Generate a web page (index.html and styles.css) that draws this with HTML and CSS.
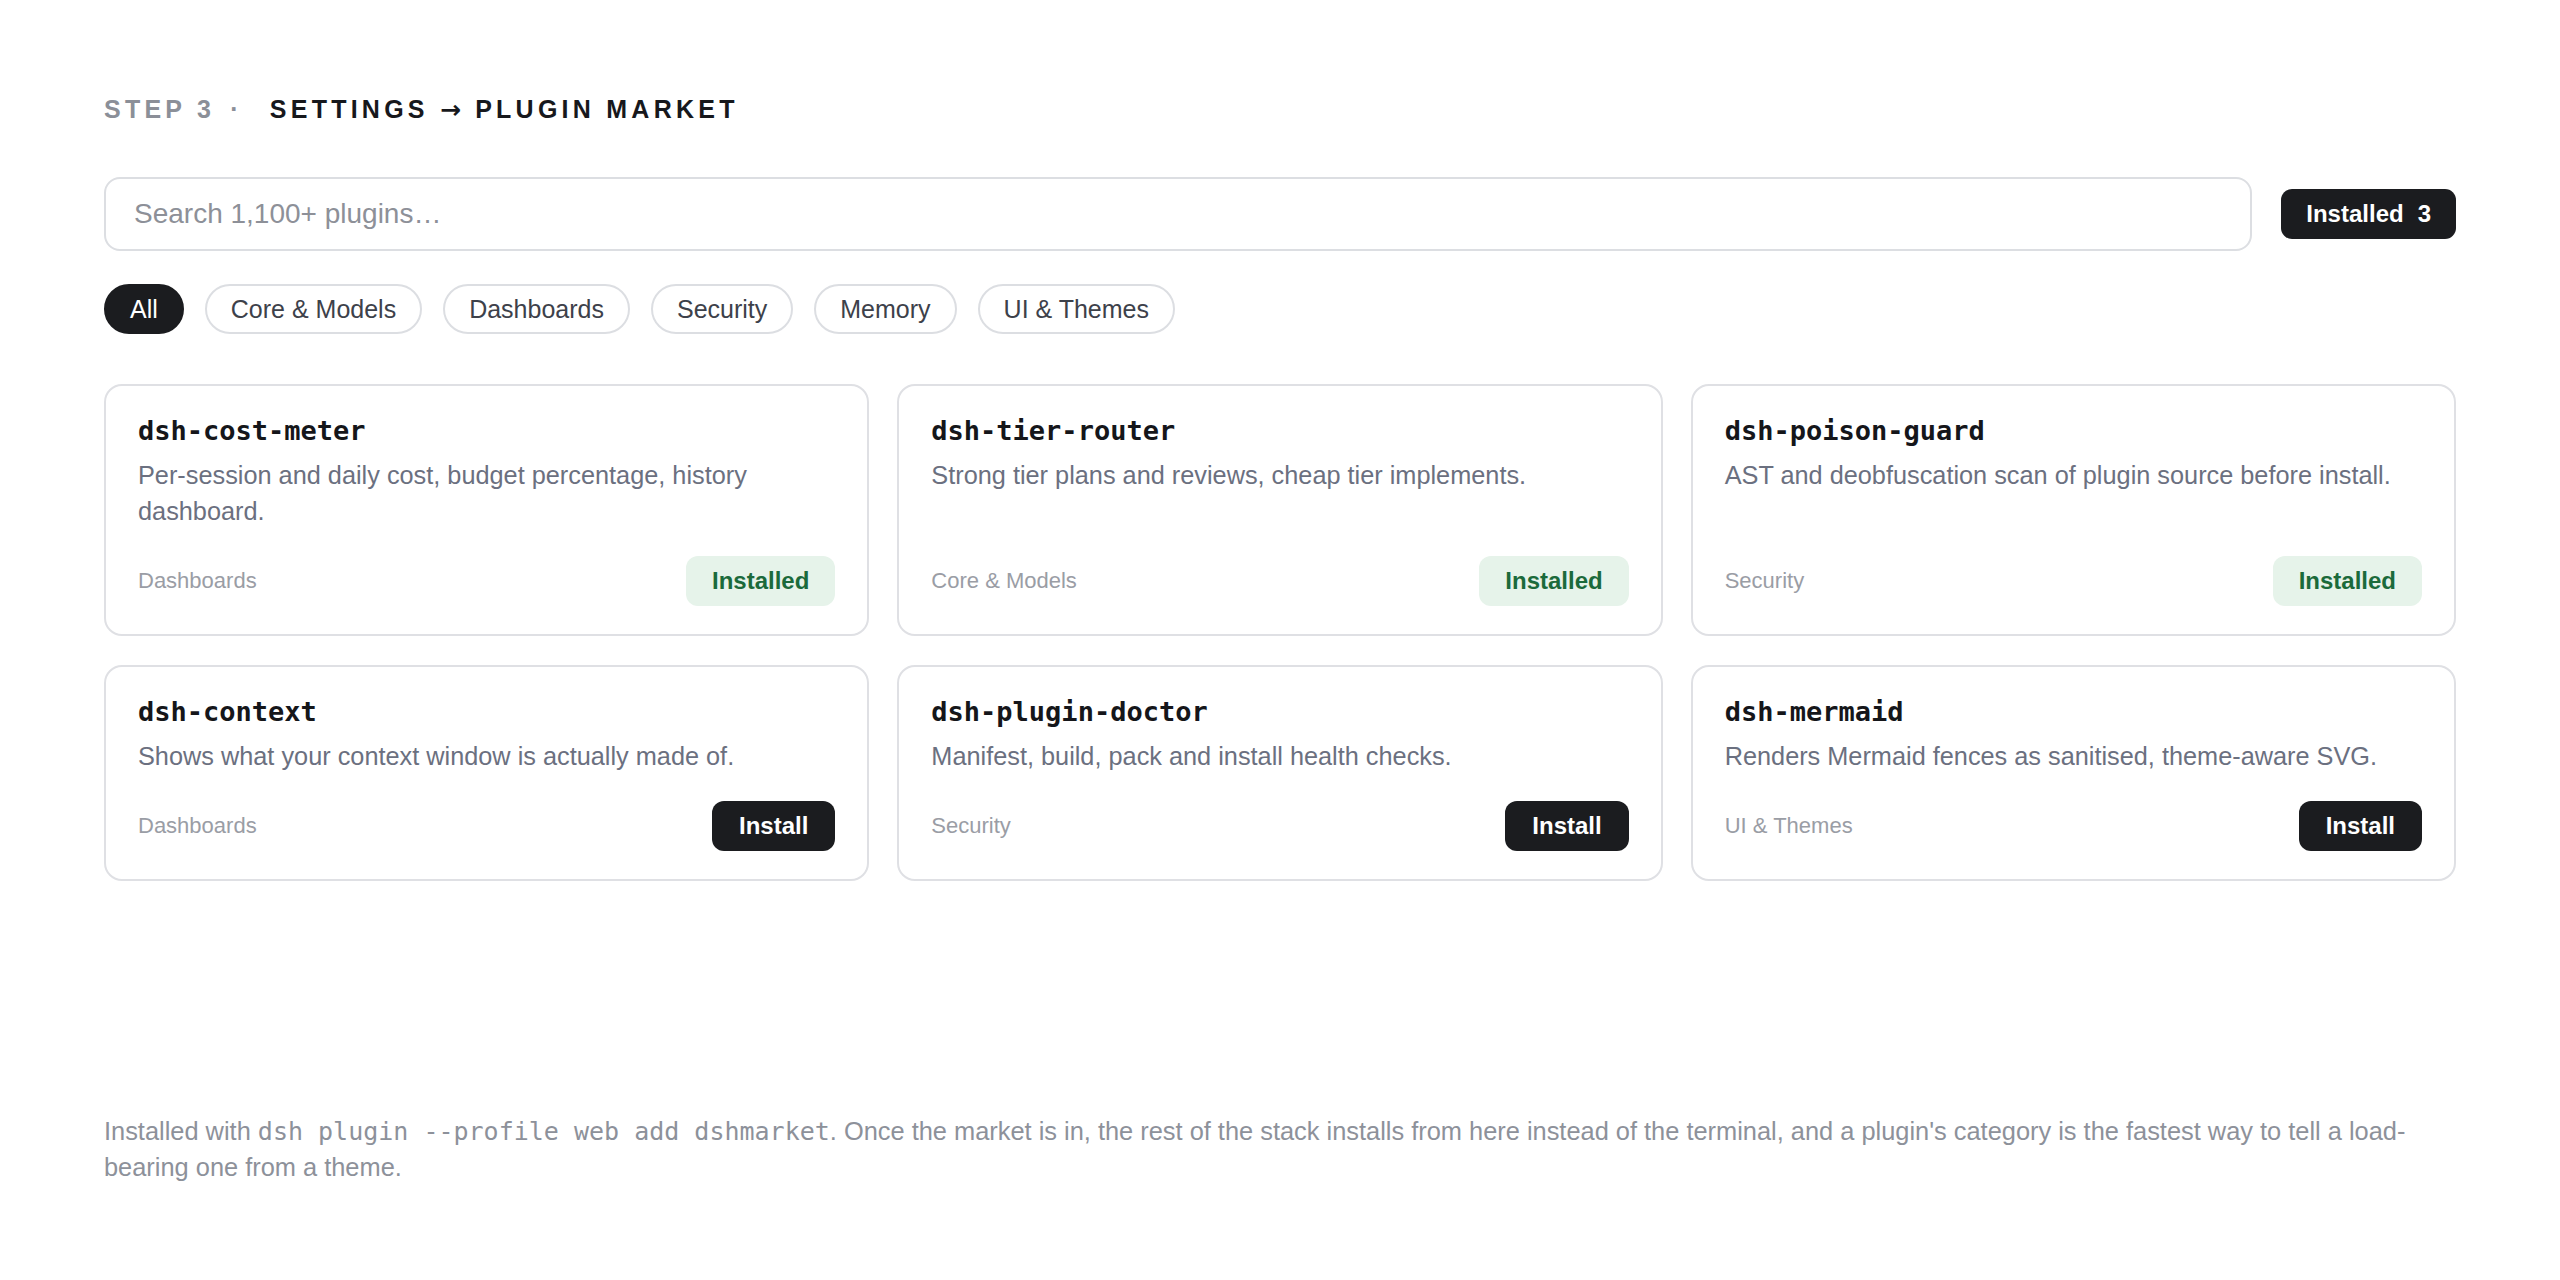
FILE: index.html
```html
<!DOCTYPE html>
<html lang="en">
<head>
<meta charset="utf-8">
<title>Plugin Market</title>
<link rel="stylesheet" href="styles.css">
</head>
<body>
<div class="page">
  <h1 class="crumb"><span class="step">STEP 3</span><span class="dot">·</span><span class="where">SETTINGS <span class="arrow">→</span> PLUGIN MARKET</span></h1>

  <div class="searchrow">
    <div class="search">Search 1,100+ plugins…</div>
    <div class="count">Installed <span class="num">3</span></div>
  </div>

  <div class="chips">
    <span class="chip active">All</span>
    <span class="chip">Core &amp; Models</span>
    <span class="chip">Dashboards</span>
    <span class="chip">Security</span>
    <span class="chip">Memory</span>
    <span class="chip">UI &amp; Themes</span>
  </div>

  <div class="grid">
    <div class="card">
      <div class="name">dsh-cost-meter</div>
      <div class="desc">Per-session and daily cost, budget percentage, history dashboard.</div>
      <div class="foot"><span class="cat">Dashboards</span><span class="btn done">Installed</span></div>
    </div>
    <div class="card">
      <div class="name">dsh-tier-router</div>
      <div class="desc">Strong tier plans and reviews, cheap tier implements.</div>
      <div class="foot"><span class="cat">Core &amp; Models</span><span class="btn done">Installed</span></div>
    </div>
    <div class="card">
      <div class="name">dsh-poison-guard</div>
      <div class="desc">AST and deobfuscation scan of plugin source before install.</div>
      <div class="foot"><span class="cat">Security</span><span class="btn done">Installed</span></div>
    </div>
    <div class="card">
      <div class="name">dsh-context</div>
      <div class="desc">Shows what your context window is actually made of.</div>
      <div class="foot"><span class="cat">Dashboards</span><span class="btn">Install</span></div>
    </div>
    <div class="card">
      <div class="name">dsh-plugin-doctor</div>
      <div class="desc">Manifest, build, pack and install health checks.</div>
      <div class="foot"><span class="cat">Security</span><span class="btn">Install</span></div>
    </div>
    <div class="card">
      <div class="name">dsh-mermaid</div>
      <div class="desc">Renders Mermaid fences as sanitised, theme-aware SVG.</div>
      <div class="foot"><span class="cat">UI &amp; Themes</span><span class="btn">Install</span></div>
    </div>
  </div>

  <p class="note">Installed with <code>dsh plugin --profile web add dshmarket</code>. Once the market is in, the rest of the stack installs from here instead of the terminal, and a plugin's category is the fastest way to tell a load-bearing one from a theme.</p>
</div>
</body>
</html>
```

FILE: styles.css
```css
html, body {
  margin: 0;
  padding: 0;
  background: #ffffff;
}

body {
  font-family: "Liberation Sans", Arial, Helvetica, sans-serif;
  color: #17181c;
}

.page {
  box-sizing: border-box;
  min-height: 100vh;
  padding: 94px 104px 95px;
  display: flex;
  flex-direction: column;
}

.crumb {
  margin: 0;
  height: 30px;
  font-size: 25px;
  line-height: 30px;
  font-weight: 700;
  letter-spacing: 0.17em;
  display: flex;
  align-items: center;
  white-space: nowrap;
  overflow: visible;
}

.step {
  color: #8b8f98;
}

.dot {
  color: #8b8f98;
  margin: 0 27px 0 15px;
}

.where {
  color: #17181c;
  line-height: 30px;
}

.arrow {
  font-family: "DejaVu Sans", sans-serif;
  font-weight: 700;
  font-size: 25px;
  line-height: 1;
  letter-spacing: 0;
  margin-right: 3px;
}

.searchrow {
  margin-top: 53px;
  display: flex;
  align-items: center;
  gap: 29px;
}

.search {
  flex: 1;
  box-sizing: border-box;
  height: 74px;
  border: 2px solid #dcdee2;
  border-radius: 16px;
  padding: 0 28px;
  display: flex;
  align-items: center;
  font-size: 28px;
  color: #8d9098;
}

.count {
  height: 50px;
  box-sizing: border-box;
  padding: 0 25px;
  display: flex;
  align-items: center;
  background: #1b1c1f;
  color: #ffffff;
  font-size: 24px;
  font-weight: 700;
  border-radius: 11px;
}

.count .num {
  margin-left: 14px;
}

.chips {
  margin-top: 33px;
  display: flex;
  gap: 21px;
}

.chip {
  box-sizing: border-box;
  height: 50px;
  padding: 0 24px;
  display: flex;
  align-items: center;
  border: 2px solid #dcdee2;
  border-radius: 25px;
  font-size: 25px;
  color: #3d414a;
}

.chip.active {
  background: #1b1c1f;
  border-color: #1b1c1f;
  color: #ffffff;
}

.grid {
  margin-top: 50px;
  display: grid;
  grid-template-columns: repeat(3, 1fr);
  gap: 29px 28px;
}

.card {
  border: 2px solid #dfe0e4;
  border-radius: 18px;
  padding: 29px 32px 28px;
  display: flex;
  flex-direction: column;
}

.name {
  font-family: "DejaVu Sans Mono", "Liberation Mono", monospace;
  font-weight: 700;
  font-size: 27px;
  line-height: 32px;
  color: #15161a;
}

.desc {
  margin-top: 10px;
  margin-bottom: 27px;
  font-size: 25.3px;
  line-height: 36px;
  color: #6b7080;
}

.foot {
  margin-top: auto;
  display: flex;
  justify-content: space-between;
  align-items: center;
}

.cat {
  font-size: 22px;
  color: #9a9da5;
}

.btn {
  box-sizing: border-box;
  height: 50px;
  padding: 0 27px;
  display: flex;
  align-items: center;
  border-radius: 12px;
  background: #1b1c1f;
  color: #ffffff;
  font-size: 24px;
  font-weight: 700;
}

.btn.done {
  background: #e6f3ea;
  color: #1b6a3b;
  padding: 0 26px;
}

.note {
  margin: auto 0 0;
  font-size: 25.4px;
  line-height: 36px;
  color: #8d919a;
}

.note code {
  font-family: "DejaVu Sans Mono", "Liberation Mono", monospace;
  font-size: 25px;
  line-height: 1;
}
```
